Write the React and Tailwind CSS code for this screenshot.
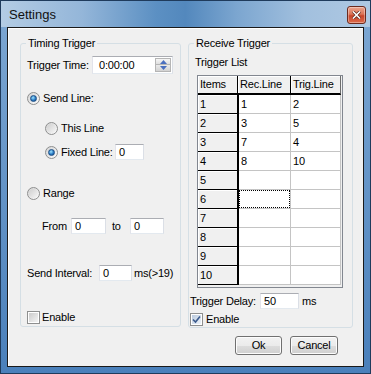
import React from "react";

const FONT = "font-['Liberation_Sans',Arial,sans-serif]";

function Radio({ checked }) {
  return (
    <span className="w-[13px] h-[13px] rounded-full border border-[#8e8f8f] bg-[linear-gradient(135deg,#d4d4d4,#fcfcfc)] flex items-center justify-center shrink-0">
      {checked ? (
        <span className="w-[7px] h-[7px] rounded-full border border-[#1d4f86] bg-[radial-gradient(circle_at_40%_35%,#9fe4ff,#2a7bc4_55%,#0f3f7a)]" />
      ) : (
        <span className="w-[9px] h-[9px] rounded-full bg-[linear-gradient(135deg,#cfcfcf,#f6f6f6)]" />
      )}
    </span>
  );
}

function Check({ checked }) {
  return (
    <span className="w-[13px] h-[13px] border border-[#8e8f8f] bg-white flex items-center justify-center shrink-0">
      <span
        className={
          "w-[9px] h-[9px] flex items-center justify-center " +
          (checked
            ? "bg-[linear-gradient(135deg,#b9c9dd,#eef3f9)]"
            : "bg-[linear-gradient(135deg,#cbcbcb,#f4f4f4)]")
        }
      >
        {checked && (
          <svg width="9" height="9" viewBox="0 0 9 9">
            <path d="M1 4.5 L3.5 7 L8 1.5" fill="none" stroke="#3b5a8c" strokeWidth="1.6" />
          </svg>
        )}
      </span>
    </span>
  );
}

function Input({ w, children, h = "h-[16px]" }) {
  return (
    <div
      className={`${w} ${h} shrink-0 bg-white border border-[#abadb3] border-l-[#e2e3ea] border-r-[#dbdfe6] border-b-[#e3e9ef] flex items-center pl-[3px] pt-[1px]`}
    >
      {children}
    </div>
  );
}

function GroupBox({ title, className, children }) {
  return (
    <div className={`relative border border-[#d5dfe5] rounded-[3px] ${className}`}>
      <span className="absolute left-[5px] top-[-8px] px-[2px] bg-[#f0f0f0] leading-[14px]">
        {title}
      </span>
      {children}
    </div>
  );
}

function Button({ w, children }) {
  return (
    <div
      className={`${w} h-[19px] rounded-[3px] border border-[#707070] shadow-[inset_0_0_0_1px_#fcfcfc] bg-[linear-gradient(180deg,#f2f2f2_0%,#ebebeb_50%,#dddddd_51%,#cfcfcf_100%)] flex items-center justify-center`}
    >
      {children}
    </div>
  );
}

const rows = [
  ["1", "1", "2"],
  ["2", "3", "5"],
  ["3", "7", "4"],
  ["4", "8", "10"],
  ["5", "", ""],
  ["6", "", ""],
  ["7", "", ""],
  ["8", "", ""],
  ["9", "", ""],
  ["10", "", ""],
];

function Table() {
  return (
    <div className="ml-[8px] mt-[6px] w-[146px] h-[213px] border border-[#828790] bg-[#f0f0f0] flex flex-col">
      <div className="flex h-[19px] shrink-0">
        <div className="w-[40px] border-r border-black border-b-2 bg-[#f0f0f0] shadow-[inset_1px_1px_0_#fff] flex items-center pl-[2px]">
          Items
        </div>
        <div className="w-[53px] border-r border-black border-b-2 bg-[#f0f0f0] shadow-[inset_1px_1px_0_#fff] flex items-center pl-[2px]">
          Rec.Line
        </div>
        <div className="w-[50px] border-r border-[#6d6d6d] border-b-2 border-b-black bg-[#f0f0f0] shadow-[inset_1px_1px_0_#fff] flex items-center pl-[2px]">
          Trig.Line
        </div>
      </div>
      {rows.map((r, i) => (
        <div key={i} className="flex h-[19px] shrink-0">
          <div className="w-[41px] border-r-2 border-b border-black bg-[#f0f0f0] shadow-[inset_1px_1px_0_#fff] flex items-center pl-[2px]">
            {r[0]}
          </div>
          <div className="w-[52px] border-r border-b border-[#c4c4c4] bg-white flex items-center">
            {i === 5 ? (
              <div className="w-full h-full border border-dotted border-black" />
            ) : (
              <span className="pl-[2px]">{r[1]}</span>
            )}
          </div>
          <div className="w-[50px] border-r border-b border-[#c4c4c4] bg-white flex items-center pl-[2px]">
            {r[2]}
          </div>
        </div>
      ))}
    </div>
  );
}

export default function App() {
  return (
    <div
      className={`${FONT} text-[11px] tracking-[-0.2px] text-black w-[371px] h-[374px] border border-[#1f3b5c] bg-[linear-gradient(180deg,#7ea8d3,#4a80bb)] flex flex-col overflow-hidden`}
    >
      {/* title bar */}
      <div className="h-[26px] shrink-0 flex items-center justify-between pl-[8px] pr-[4px] bg-[linear-gradient(90deg,#b3cce4_0%,#94b6d9_22%,#5c90c3_42%,#5388bd_50%,#7ca6d0_64%,#a2c0de_82%,#aec8e2_100%)]">
        <span className="text-[13px] tracking-[0px] text-[#111] font-['Liberation_Sans',Arial,sans-serif] mt-[2px]">
          Settings
        </span>
        <div className="w-[19px] h-[18px] mt-[2px] rounded-[3px] border border-[#6b2a1e] bg-[linear-gradient(180deg,#eba58e_0%,#dc7457_45%,#c7442a_55%,#dd6b4b_100%)] shadow-[inset_0_0_0_1px_rgba(255,255,255,0.35)] flex items-center justify-center">
          <svg width="9" height="8" viewBox="0 0 9 8">
            <path d="M1 0.5 L8 7.5 M8 0.5 L1 7.5" stroke="#5a2418" strokeWidth="3" />
            <path d="M1 0.5 L8 7.5 M8 0.5 L1 7.5" stroke="#ffffff" strokeWidth="1.6" />
          </svg>
        </div>
      </div>

      {/* frame body */}
      <div className="flex-1 px-[6px] pb-[6px] flex flex-col">
        <div className="w-[357px] h-[340px] border border-[#1a1a1a] bg-[#f0f0f0] shadow-[inset_1px_1px_0_#fff] flex flex-col pt-[15px] pl-[12px]">
          <div className="flex items-start">
            {/* Timing Trigger */}
            <GroupBox title="Timing Trigger" className="w-[161px] h-[284px] flex flex-col pl-[6px]">
              <div className="mt-[12px] h-[18px] flex items-center">
                <span className="w-[65px]">Trigger Time:</span>
                <div className="relative w-[81px] h-[18px] bg-white border border-[#abadb3] border-l-[#e2e3ea] border-r-[#dbdfe6] border-b-[#e3e9ef] flex items-center pl-[6px]">
                  0:00:00
                  <div className="absolute right-[1px] top-[1px] w-[16px] h-[14px] flex flex-col">
                    <div className="h-[7px] border border-[#b5b5b5] bg-[linear-gradient(180deg,#f6f6f6,#dedede)] flex items-center justify-center">
                      <svg width="7" height="4" viewBox="0 0 7 4"><path d="M0 4 L3.5 0 L7 4 Z" fill="#4a6fbf" /></svg>
                    </div>
                    <div className="h-[7px] border border-t-0 border-[#b5b5b5] bg-[linear-gradient(180deg,#eaeaea,#d2d2d2)] flex items-center justify-center">
                      <svg width="7" height="4" viewBox="0 0 7 4"><path d="M0 0 L3.5 4 L7 0 Z" fill="#4a6fbf" /></svg>
                    </div>
                  </div>
                </div>
              </div>
              <div className="mt-[16px] h-[16px] flex items-center gap-[3px]">
                <Radio checked />
                <span>Send Line:</span>
              </div>
              <div className="mt-[14px] h-[16px] flex items-center gap-[3px] pl-[18px]">
                <Radio />
                <span>This Line</span>
              </div>
              <div className="mt-[8px] h-[16px] flex items-center pl-[18px]">
                <Radio checked />
                <span className="ml-[3px] w-[54px]">Fixed Line:</span>
                <Input w="w-[29px]">0</Input>
              </div>
              <div className="mt-[25px] h-[16px] flex items-center gap-[3px]">
                <Radio />
                <span>Range</span>
              </div>
              <div className="mt-[17px] h-[16px] flex items-center pl-[15px]">
                <span className="w-[29px]">From</span>
                <Input w="w-[35px]">0</Input>
                <span className="ml-[6px] w-[18px]">to</span>
                <Input w="w-[34px]">0</Input>
              </div>
              <div className="mt-[31px] h-[16px] flex items-center">
                <span className="w-[72px]">Send Interval:</span>
                <Input w="w-[33px]">0</Input>
                <span className="ml-[2px]">ms(&gt;19)</span>
              </div>
              <div className="mt-[28px] h-[16px] flex items-center gap-[2px]">
                <Check />
                <span>Enable</span>
              </div>
            </GroupBox>

            {/* Receive Trigger */}
            <GroupBox title="Receive Trigger" className="ml-[7px] w-[165px] h-[285px] flex flex-col">
              <div className="mt-[11px] h-[14px] flex items-center pl-[6px]">Trigger List</div>
              <Table />
              <div className="mt-[5px] h-[16px] flex items-center pl-[1px]">
                <span className="w-[70px]">Trigger Delay:</span>
                <Input w="w-[39px]">50</Input>
                <span className="ml-[3px]">ms</span>
              </div>
              <div className="mt-[2px] h-[16px] flex items-center gap-[3px] pl-[1px]">
                <Check checked />
                <span>Enable</span>
              </div>
            </GroupBox>
          </div>
          <div className="mt-[8px] flex justify-end pr-[25px] gap-[8px]">
            <Button w="w-[47px]">Ok</Button>
            <Button w="w-[48px]">Cancel</Button>
          </div>
        </div>
      </div>
    </div>
  );
}
